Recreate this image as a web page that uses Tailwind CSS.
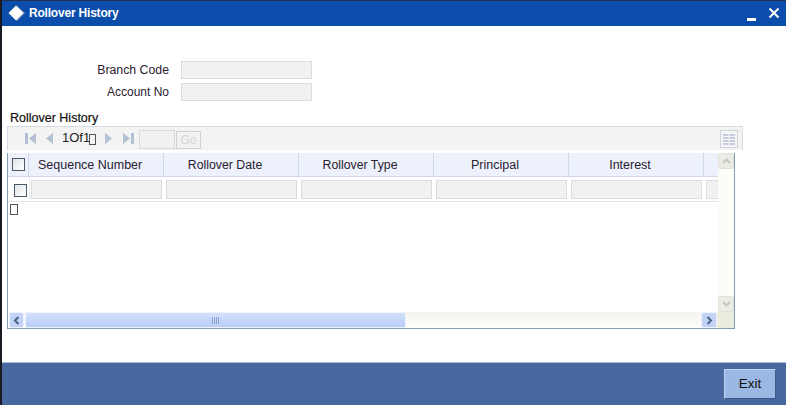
<!DOCTYPE html>
<html><head><meta charset="utf-8"><script src="https://cdn.jsdelivr.net/npm/@tailwindcss/browser@4"></script></head>
<body class="m-0">
<div class="w-[786px] h-[405px] overflow-hidden bg-white flex flex-col font-['Liberation_Sans',Arial,sans-serif] text-[12.5px] text-[#2b2030] border-l-2 border-[#1a1a22]">
  <!-- title -->
  <header class="h-[26px] shrink-0 bg-[#0a4dab] border-t border-[#23304f] flex items-center pl-[5px] pr-[5px] text-white">
    <svg width="20" height="20" viewBox="0 0 20 20" class="-ml-px mb-[1px]"><path d="M11 3 L19 10 L11 18 L3 10 Z" fill="#7d8fb5"/><path d="M10 2.5 L17.5 10 L10 17.5 L2.5 10 Z" fill="#fff"/></svg>
    <span class="ml-[3px] font-bold text-[12px] tracking-[-0.2px] mb-[1px]">Rollover History</span>
    <div class="ml-auto flex items-center gap-[12px]">
      <svg width="9" height="10" viewBox="0 0 9 10" class="mt-[6px]"><rect x="0" y="6" width="9" height="3" fill="#fff"/></svg>
      <svg width="12" height="12" viewBox="0 0 12 12" class="mb-[2px] mr-[1px]"><path d="M1.5 1.5 L10.5 10.5 M10.5 1.5 L1.5 10.5" stroke="#fff" stroke-width="2"/></svg>
    </div>
  </header>
  <main class="flex-1 min-h-0 flex flex-col">
    <!-- fields -->
    <div class="mt-[35px] flex flex-col gap-[4px]">
      <div class="flex items-center h-[18px]"><label class="w-[167px] text-right text-[12.3px]">Branch Code</label><div class="ml-[12px] w-[131px] h-[18px] bg-[#f1f1f1] border border-[#dcdcdc]"></div></div>
      <div class="flex items-center h-[18px]"><label class="w-[167px] text-right text-[12px]">Account No</label><div class="ml-[12px] w-[131px] h-[18px] bg-[#f1f1f1] border border-[#dcdcdc]"></div></div>
    </div>
    <div class="mt-[9px] ml-[8px] h-[15px] leading-[16px] text-[12.5px] text-[#111] [-webkit-text-stroke:0.2px_#111]">Rollover History</div>
    <!-- toolbar -->
    <div class="ml-[5px] mt-[1px] w-[736px] h-[24px] shrink-0 bg-[#f3f3f3] border border-[#d6dbe2] border-b-0 flex items-center pl-[17px] pr-[4px]">
      <svg width="11" height="11" viewBox="0 0 11 11"><rect x="0" y="0" width="3" height="11" fill="#b4c0d4"/><path d="M11 0 V11 L4 5.5Z" fill="#b4c0d4"/></svg>
      <svg width="8" height="11" viewBox="0 0 8 11" class="ml-[9px]"><path d="M8 0 V11 L1 5.5Z" fill="#b4c0d4"/></svg>
      <span class="ml-[9px] mb-[2px] text-[13px] text-[#222] w-[27px] leading-none">1Of1</span>
      <span class="w-[7px] h-[11px] border border-[#555] mt-[2px] shrink-0"></span>
      <svg width="8" height="11" viewBox="0 0 8 11" class="ml-[9px]"><path d="M0 0 V11 L7 5.5Z" fill="#b4c0d4"/></svg>
      <svg width="11" height="11" viewBox="0 0 11 11" class="ml-[10px]"><path d="M0 0 V11 L7 5.5Z" fill="#b4c0d4"/><rect x="8" y="0" width="3" height="11" fill="#b4c0d4"/></svg>
      <div class="ml-[5px] w-[36px] h-[19px] mt-[2px] bg-[#f1f1f1] border border-[#d8d8d8]"></div>
      <div class="ml-[1px] w-[25px] h-[18px] mt-[2px] bg-[#f1f1f1] border border-[#cfd3cf] text-[12px] text-[#d4d4d4] flex items-center justify-center">Go</div>
      <div class="ml-auto w-[18px] h-[18px] bg-[#f6f6f6] border border-[#cfd4da] flex items-center justify-center">
        <svg width="14" height="12" viewBox="0 0 14 12"><g fill="#c4cde0"><rect x="1" y="1" width="5.5" height="2"/><rect x="7.5" y="1" width="5.5" height="2"/><rect x="1" y="4" width="5.5" height="2"/><rect x="7.5" y="4" width="5.5" height="2"/><rect x="1" y="7" width="5.5" height="2"/><rect x="7.5" y="7" width="5.5" height="2"/><rect x="1" y="10" width="5.5" height="2"/><rect x="7.5" y="10" width="5.5" height="2"/></g></svg>
      </div>
    </div>
    <!-- table box -->
    <div class="ml-[5px] mt-[3px] w-[728px] h-[176px] shrink-0 border-l border-r border-b border-[#7f9db9] flex flex-col">
      <div class="flex-1 min-h-0 flex">
        <div class="w-[710px] overflow-hidden flex flex-col">
          <div class="h-[24px] shrink-0 flex bg-[#edf1fc] border-b border-[#cfd8e6]">
            <div class="w-[21px] shrink-0 flex items-center justify-center border-r border-[#cfd8e6]"><span class="w-[13px] h-[13px] border border-[#4a5a66] bg-gradient-to-br from-[#dfe4ea] to-white"></span></div>
            <div class="w-[135px] shrink-0 border-r border-[#cfd8e6] pl-[9px] pt-[2px] flex items-center">Sequence Number</div>
            <div class="w-[135px] shrink-0 border-r border-[#cfd8e6] pr-[12px] pt-[2px] flex items-center justify-center text-[12.3px]">Rollover Date</div>
            <div class="w-[135px] shrink-0 border-r border-[#cfd8e6] pr-[12px] pt-[2px] flex items-center justify-center text-[12.3px]">Rollover Type</div>
            <div class="w-[135px] shrink-0 border-r border-[#cfd8e6] pr-[12px] pt-[2px] flex items-center justify-center">Principal</div>
            <div class="w-[135px] shrink-0 border-r border-[#cfd8e6] pr-[12px] pt-[2px] flex items-center justify-center">Interest</div>
            <div class="w-[20px] shrink-0"></div>
          </div>
          <div class="h-[25px] shrink-0 flex items-start pt-[3px] border-b border-[#e4e4e4]">
            <div class="w-[22px] h-[22px] -mt-[3px] pt-[5px] pr-[2px] shrink-0 border-r border-[#e8edf2] flex items-center justify-end"><span class="w-[13px] h-[13px] border border-[#4a5a66] bg-gradient-to-br from-[#dfe4ea] to-white"></span></div>
            <div class="ml-px w-[131px] h-[19px] shrink-0 bg-[#f1f1f1] border border-[#dcdcdc]"></div>
            <div class="ml-[4px] w-[131px] h-[19px] shrink-0 bg-[#f1f1f1] border border-[#dcdcdc]"></div>
            <div class="ml-[4px] w-[131px] h-[19px] shrink-0 bg-[#f1f1f1] border border-[#dcdcdc]"></div>
            <div class="ml-[4px] w-[131px] h-[19px] shrink-0 bg-[#f1f1f1] border border-[#dcdcdc]"></div>
            <div class="ml-[4px] w-[131px] h-[19px] shrink-0 bg-[#f1f1f1] border border-[#dcdcdc]"></div>
            <div class="ml-[4px] w-[20px] h-[19px] shrink-0 bg-[#f1f1f1] border border-[#dcdcdc]"></div>
          </div>
          <div class="ml-[2px] mt-[2px] w-[8px] h-[11px] border border-[#555]"></div>
        </div>
        <!-- v scroll -->
        <div class="w-[16px] shrink-0 bg-[#fdfdf8] flex flex-col justify-between">
          <div class="h-[16px] bg-[#ecebe4] border border-[#e0e0d8] rounded-[2px] flex items-center justify-center"><svg width="9" height="6" viewBox="0 0 9 6"><path d="M1 5 L4.5 1.5 L8 5" fill="none" stroke="#c4c9c4" stroke-width="2"/></svg></div>
          <div class="h-[16px] bg-[#ecebe4] border border-[#e0e0d8] rounded-[2px] flex items-center justify-center"><svg width="9" height="6" viewBox="0 0 9 6"><path d="M1 1 L4.5 4.5 L8 1" fill="none" stroke="#c4c9c4" stroke-width="2"/></svg></div>
        </div>
      </div>
      <!-- h scroll -->
      <div class="h-[16px] shrink-0 flex">
        <div class="ml-px w-[15px] bg-[#c3d3f8] border border-[#eef2fb] rounded-[2px] flex items-center justify-center"><svg width="7" height="9" viewBox="0 0 7 9"><path d="M5.5 1 L2 4.5 L5.5 8" fill="none" stroke="#4d6185" stroke-width="2"/></svg></div>
        <div class="flex-1 flex pl-[1px] bg-gradient-to-b from-[#f4f3ee] to-[#fdfdfb]">
          <div class="w-[381px] bg-gradient-to-b from-[#d3e0fb] to-[#b9cdf7] border border-[#eef2fb] rounded-[2px] flex items-center justify-center"><svg width="8" height="7" viewBox="0 0 8 7"><path d="M0.5 0V7M2.5 0V7M4.5 0V7M6.5 0V7" stroke="#8ea6d4"/></svg></div>
        </div>
        <div class="w-[16px] bg-[#c3d3f8] border border-[#eef2fb] rounded-[2px] flex items-center justify-center"><svg width="7" height="9" viewBox="0 0 7 9"><path d="M1.5 1 L5 4.5 L1.5 8" fill="none" stroke="#4d6185" stroke-width="2"/></svg></div>
        <div class="w-[17px] bg-[#ecebdf]"></div>
      </div>
    </div>
  </main>
  <footer class="h-[43px] shrink-0 bg-[#4a68a0] border-t border-[#a9bcd6] flex items-center justify-end pr-[10px]">
    <button class="w-[52px] h-[30px] bg-[#9ab8e3] border border-[#3d5a8a] border-t-[#c2d4ec] border-l-[#c2d4ec] text-[13.5px] text-[#111]">Exit</button>
  </footer>
</div>
</body></html>
